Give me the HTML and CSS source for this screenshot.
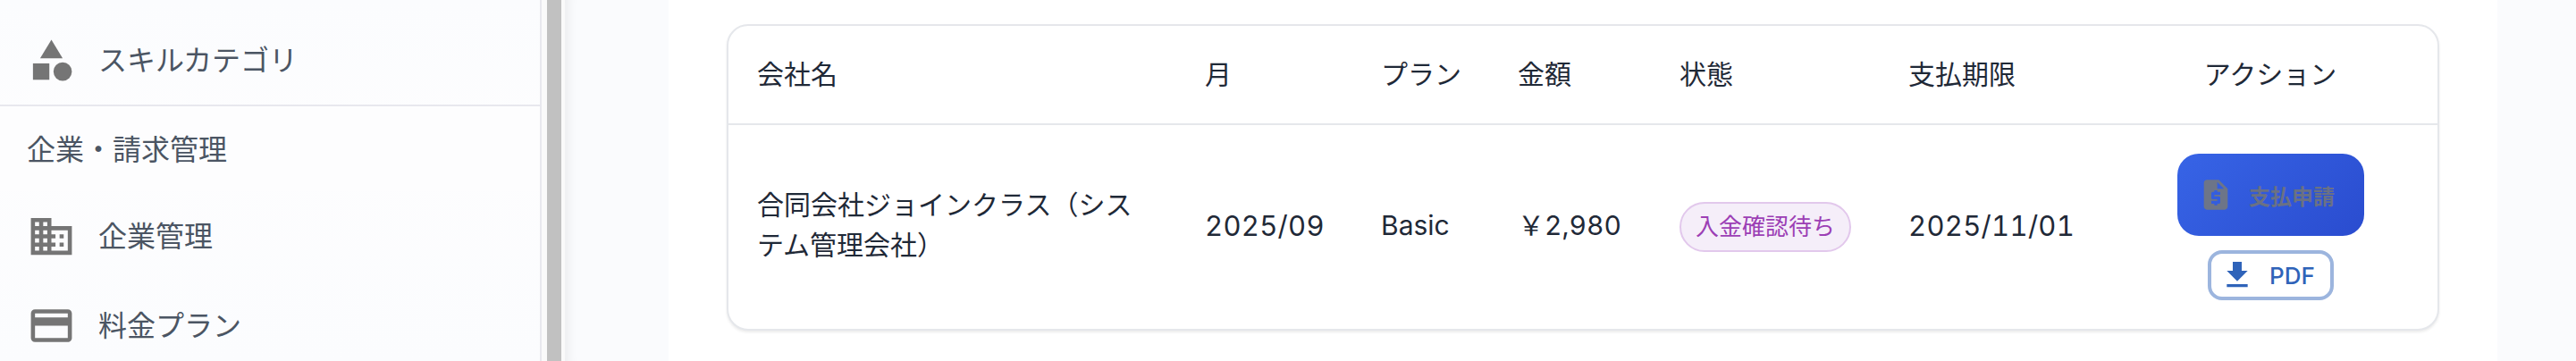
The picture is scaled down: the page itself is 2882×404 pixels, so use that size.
FILE: index.html
```html
<!DOCTYPE html>
<html lang="ja">
<head>
<meta charset="utf-8">
<title>請求管理</title>
<link rel="stylesheet" href="styles.css">
</head>
<body>
<div class="app">
  <nav class="sidebar">
    <a class="nav-item">
      <svg class="nav-icon" viewBox="0 0 24 24"><path d="M12 2l-5.5 9h11z"/><circle cx="17.5" cy="17.5" r="4.5"/><path d="M3 13.5h8v8H3z"/></svg>
      <span class="nav-label">スキルカテゴリ</span>
    </a>
    <div class="nav-section"><span class="nav-label">企業・請求管理</span></div>
    <a class="nav-item">
      <svg class="nav-icon" viewBox="0 0 24 24"><path d="M12 7V3H2v18h20V7H12zM6 19H4v-2h2v2zm0-4H4v-2h2v2zm0-4H4V9h2v2zm0-4H4V5h2v2zm4 12H8v-2h2v2zm0-4H8v-2h2v2zm0-4H8V9h2v2zm0-4H8V5h2v2zm10 12h-8v-2h2v-2h-2v-2h2v-2h-2V9h8v10zm-2-8h-2v2h2v-2zm0 4h-2v2h2v-2z"/></svg>
      <span class="nav-label">企業管理</span>
    </a>
    <a class="nav-item">
      <svg class="nav-icon" viewBox="0 0 24 24"><path d="M20 4H4c-1.11 0-1.99.89-1.99 2L2 18c0 1.11.89 2 2 2h16c1.11 0 2-.89 2-2V6c0-1.11-.89-2-2-2zm0 14H4v-6h16v6zm0-10H4V6h16v2z"/></svg>
      <span class="nav-label">料金プラン</span>
    </a>
  </nav>
  <div class="scrollbar"><div class="scrollbar-thumb"></div></div>
  <main class="content">
    <section class="panel">
      <div class="card">
        <table class="table">
          <colgroup>
            <col class="col-company"><col class="col-month"><col class="col-plan"><col class="col-amount"><col class="col-status"><col class="col-due"><col class="col-action">
          </colgroup>
          <thead>
            <tr>
              <th>会社名</th><th>月</th><th>プラン</th><th>金額</th><th>状態</th><th>支払期限</th><th class="center">アクション</th>
            </tr>
          </thead>
          <tbody>
            <tr>
              <td class="text">合同会社ジョインクラス（システム管理会社）</td>
              <td class="text date">2025/09</td>
              <td class="text">Basic</td>
              <td class="text">￥2,980</td>
              <td><span class="badge">入金確認待ち</span></td>
              <td class="text date">2025/11/01</td>
              <td>
                <div class="actions">
                  <button class="btn-pay" type="button">
                    <svg class="btn-pay-icon" viewBox="0 0 24 24"><path d="M14 2H6c-1.1 0-1.99.9-1.99 2L4 20c0 1.1.89 2 1.99 2H18c1.1 0 2-.9 2-2V8l-6-6zm1 10h-4v1h3c.55 0 1 .45 1 1v3c0 .55-.45 1-1 1h-1v1h-2v-1H9v-2h4v-1h-3c-.55 0-1-.45-1-1v-3c0-.55.45-1 1-1h1V9h2v1h2v2zm-2-4V3.5L17.5 8H13z"/></svg>
                    <span>支払申請</span>
                  </button>
                  <button class="btn-pdf" type="button">
                    <svg class="btn-pdf-icon" viewBox="0 0 24 24"><path d="M19 9h-4V3H9v6H5l7 7 7-7zM5 18v2h14v-2H5z"/></svg>
                    <span>PDF</span>
                  </button>
                </div>
              </td>
            </tr>
          </tbody>
        </table>
      </div>
    </section>
  </main>
</div>
</body>
</html>
```

FILE: styles.css
```css
* { box-sizing: border-box; }
html, body { margin: 0; height: 100%; overflow: hidden; background: #fafbfd; }
body { font-family: Inter, "Noto Sans CJK JP", sans-serif; }
.app { display: flex; height: 404px; width: 2882px; overflow: hidden; }

.sidebar {
  flex: 0 0 606px;
  padding-top: 17px;
  background: linear-gradient(180deg, #fbfcfe 0%, #fdfdfe 40%, #fbfcfe 100%);
  border-right: 2px solid #e8e8ee;
  color: #4b5563;
  font-size: 32px;
}
.nav-item { display: flex; align-items: center; height: 100px; padding-left: 30px; gap: 25px; }
.nav-icon { width: 55px; height: 55px; fill: #757575; flex: none; }
.nav-label { padding-bottom: 4px; }
.nav-section {
  height: 97px;
  padding-left: 30px;
  display: flex;
  align-items: center;
  border-top: 2px solid #e8e8ee;
  background: #fdfdfe;
}

.scrollbar { flex: 0 0 26px; padding: 0 4px 0 6px; background: #fafafa; }
.scrollbar-thumb { height: 100%; background: #c1c1c1; }

.content {
  flex: 1;
  display: flex;
  padding: 0 88px 0 116px;
  background: #fafbfd;
  box-shadow: inset 14px 0 12px -10px rgba(0, 0, 0, .06);
}
.panel { flex: 1; padding: 27px 65px 0; background: #fff; }

.card {
  height: 343px;
  background: #fff;
  border: 2px solid #e5e7eb;
  border-radius: 24px;
  box-shadow: 0 2px 3px rgba(0, 0, 0, .08);
  overflow: hidden;
}
.table {
  width: 100%;
  table-layout: fixed;
  border-collapse: separate;
  border-spacing: 0;
  color: #1f2937;
  font-size: 30px;
  font-variant-numeric: tabular-nums;
}
.col-company { width: 501px; }
.col-month { width: 197px; }
.col-plan { width: 153px; }
.col-amount { width: 181px; }
.col-status { width: 256px; }
.col-due { width: 250px; }
.col-action { width: 374px; }

th, td { padding: 0 32px; text-align: left; font-weight: 400; }
th { height: 111px; padding-bottom: 5px; border-bottom: 2px solid #e5e7eb; white-space: nowrap; }
th.center { text-align: center; padding: 0 0 5px 0; }
td { height: 228px; line-height: 45px; }
td.text { padding-bottom: 4px; }
td.date { font-size: 31px; letter-spacing: .3px; white-space: nowrap; }

.badge {
  display: inline-flex;
  align-items: center;
  height: 56px;
  padding: 0 16px;
  font-size: 26px;
  line-height: 1;
  white-space: nowrap;
  color: #9c3fb5;
  background: #f5eef9;
  border: 2px solid #e2c8ec;
  border-radius: 28px;
}

.actions { display: flex; flex-direction: column; align-items: center; gap: 16px; margin: 0 -32px 0 -31px; }
.btn-pay {
  display: flex;
  align-items: center;
  justify-content: center;
  gap: 17px;
  width: 209px;
  height: 92px;
  padding: 0 10px 0 0;
  border: 0;
  border-radius: 24px;
  font: 600 24px Inter, "Noto Sans CJK JP", sans-serif;
  color: #6a7184;
  background: linear-gradient(135deg, #3764e6 0%, #2a4ccf 100%);
}
.btn-pay-icon { width: 40px; height: 40px; fill: #6d7588; flex: none; }
.btn-pdf {
  display: flex;
  align-items: center;
  justify-content: center;
  gap: 16px;
  width: 141px;
  height: 56px;
  padding: 0 8px 0 0;
  border: 4px solid #9cb5de;
  border-radius: 16px;
  font: 500 26px Inter, "Noto Sans CJK JP", sans-serif;
  color: #2f63b9;
  background: #fff;
}
.btn-pdf-icon { width: 40px; height: 40px; fill: #2f63b9; flex: none; }
```
